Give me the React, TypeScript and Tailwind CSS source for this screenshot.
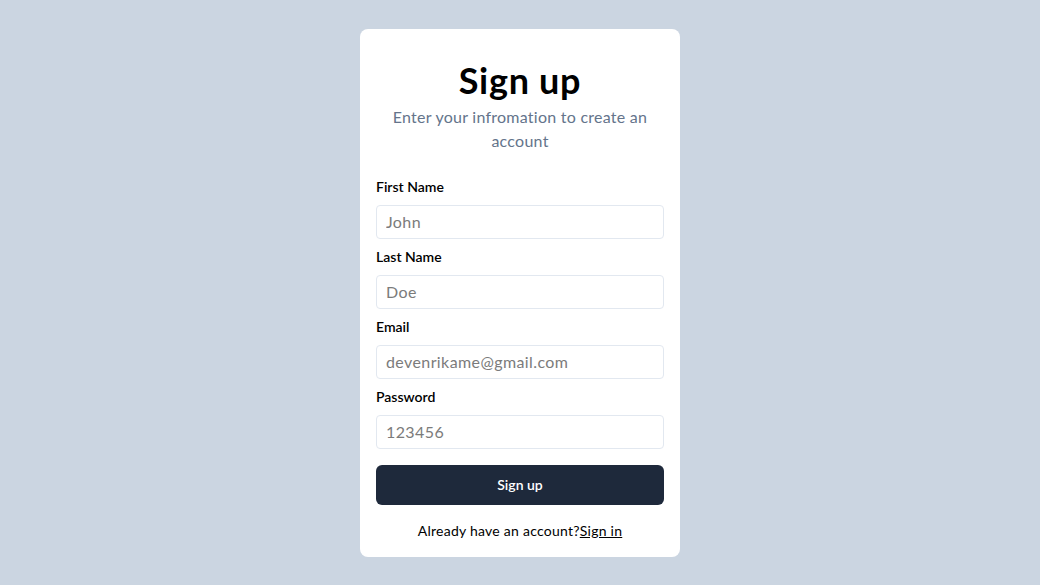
import React from "react";

function Field({ label, placeholder }: { label: string; placeholder: string }) {
  return (
    <>
      <label className="block text-[14px] leading-5 font-semibold text-black">{label}</label>
      <input
        type="text"
        placeholder={placeholder}
        className="block h-[34px] w-full rounded-[4px] border border-[#e2e8f0] bg-white px-[9px] text-[16px] tracking-[0.4px] text-black placeholder:text-[#7b7b7b] outline-none"
      />
    </>
  );
}

export default function App() {
  return (
    <div
      className="flex min-h-[585px] w-full items-center justify-center bg-[#cbd5e1]"
      style={{ fontFamily: "Lato, 'Noto Sans', sans-serif" }}
    >
      <div className="w-[320px] rounded-[8px] bg-white px-4 pt-[31px] pb-4">
        <h1 className="text-center text-[36px] leading-[40px] font-bold tracking-[0.7px] text-black">Sign up</h1>
        <p className="mt-[5px] px-3 text-center text-[16px] leading-6 tracking-[0.25px] text-[#64748b]">
          Enter your infromation to create an account
        </p>
        <form className="mt-6 flex flex-col gap-2" onSubmit={(e) => e.preventDefault()}>
          <Field label="First Name" placeholder="John" />
          <Field label="Last Name" placeholder="Doe" />
          <Field label="Email" placeholder="devenrikame@gmail.com" />
          <Field label="Password" placeholder="123456" />
          <button
            type="submit"
            className="mt-2 h-10 w-full rounded-[6px] bg-[#1e293b] text-[14px] font-semibold text-white"
          >
            Sign up
          </button>
        </form>
        <p className="mt-4 text-center text-[14px] leading-5 tracking-[0.25px] text-black">
          Already have an account?<a href="#" className="underline">Sign in</a>
        </p>
      </div>
    </div>
  );
}
